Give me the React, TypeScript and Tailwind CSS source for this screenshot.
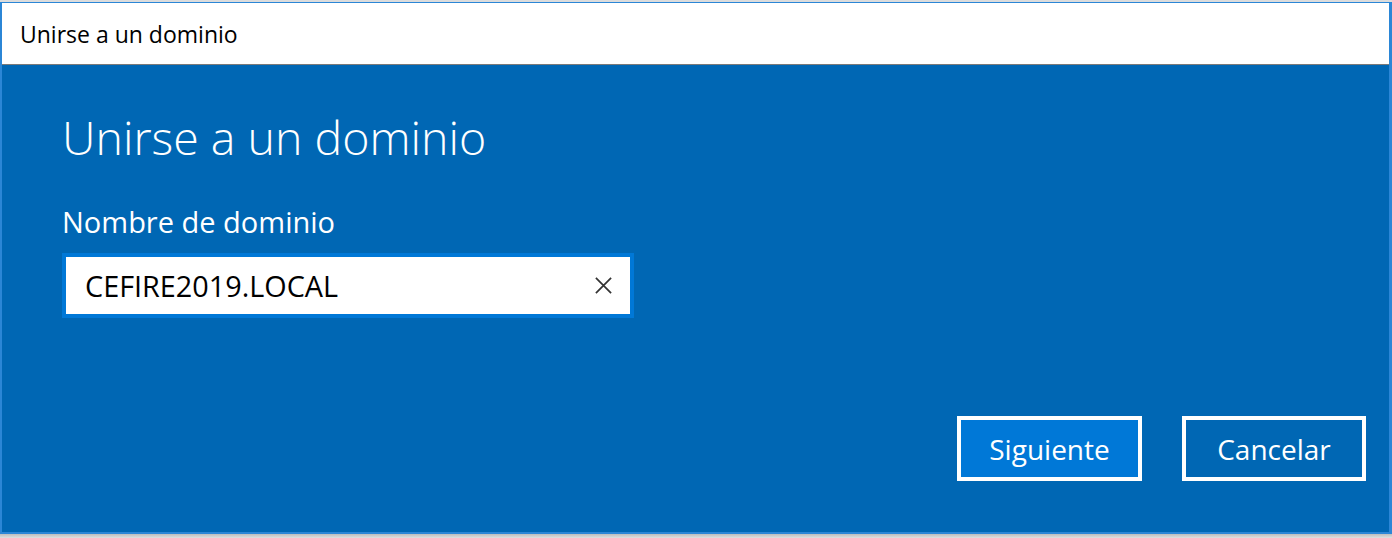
import React from "react";

export default function App() {
  const font = { fontFamily: '"Open Sans", "Noto Sans", sans-serif' };
  return (
    <div className="w-[1392px] h-[538px] flex flex-col bg-[#cfcfcf] overflow-hidden" style={font}>
      <div className="h-[2px] bg-[#dcdcdc] shrink-0" />
      <div className="flex-1 flex flex-col border-l-2 border-r-[3px] border-t border-b-2 border-[#2b86d6] min-h-0">
        <div className="h-[62px] shrink-0 bg-white border-b border-[#7a7a7a] flex items-center pl-[18px]">
          <span className="text-[23px] leading-[30px] text-black">Unirse a un dominio</span>
        </div>
        <div className="flex-1 flex flex-col bg-[#0067b4] pl-[60px] pr-[23px] min-h-0">
          <h1 className="mt-[42px] text-[46.5px] leading-[60px] font-light text-white">Unirse a un dominio</h1>
          <div className="mt-[37px] text-[29px] leading-[36px] text-white">Nombre de dominio</div>
          <div className="mt-[13px] w-[572px] h-[65px] border-4 border-[#0078d7] bg-white flex items-center pl-[19px] pr-[17px]">
            <span className="flex-1 text-[28.8px] leading-[36px] text-black">CEFIRE2019.LOCAL</span>
            <svg width="19" height="19" viewBox="0 0 20 20" className="shrink-0">
              <path d="M2 2 L18 18 M18 2 L2 18" stroke="#333" strokeWidth="1.8" fill="none" />
            </svg>
          </div>
          <div className="mt-auto mb-[51px] flex justify-end gap-[40px]">
            <button className="w-[185px] h-[65px] border-4 border-white bg-[#0078d7] text-white text-[28px] leading-[36px] flex items-center justify-center">
              Siguiente
            </button>
            <button className="w-[184px] h-[65px] border-4 border-white bg-[#0067b4] text-white text-[28px] leading-[36px] flex items-center justify-center">
              Cancelar
            </button>
          </div>
        </div>
      </div>
      <div className="h-[4px] shrink-0 bg-gradient-to-b from-[#bdbdbd] to-[#e0e0e0]" />
    </div>
  );
}
